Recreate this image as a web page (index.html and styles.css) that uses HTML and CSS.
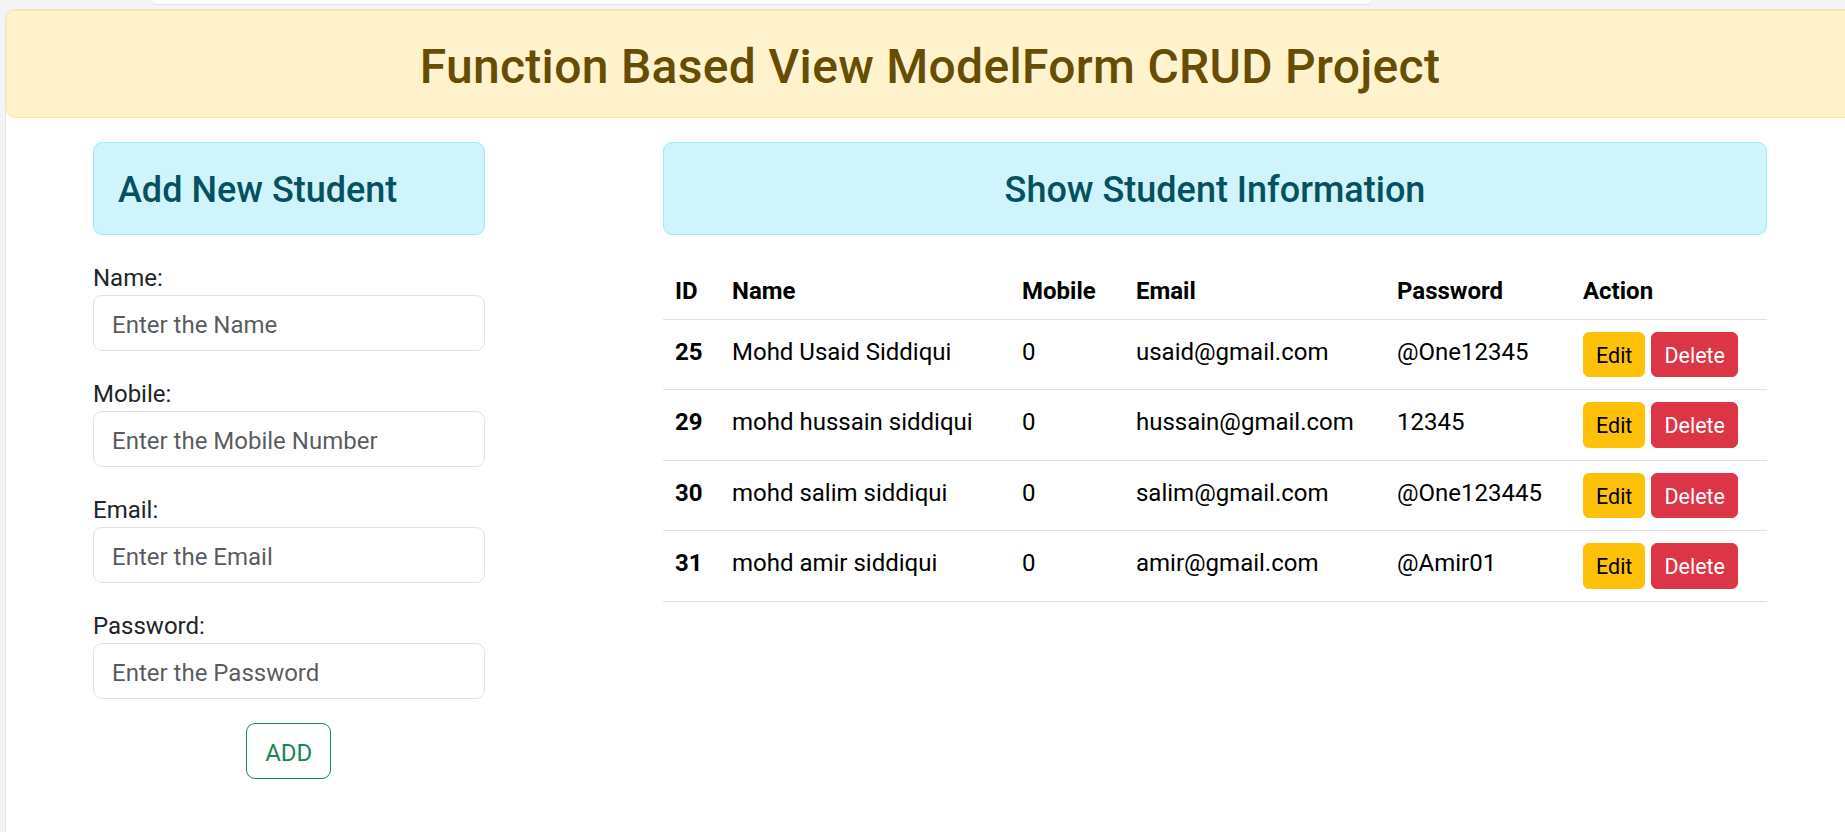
FILE: index.html
```html
<!DOCTYPE html>
<html lang="en">
<head>
<meta charset="utf-8">
<title>Function Based View ModelForm CRUD Project</title>
<link rel="stylesheet" href="styles.css">
</head>
<body>
<div class="topbar"><div class="topbar-tab"></div></div>
<div class="viewport">
  <div class="alert alert-warning banner">
    <h2 class="banner-title">Function Based View ModelForm CRUD Project</h2>
  </div>
  <div class="container">
    <div class="col-form">
      <div class="alert alert-info">
        <h4 class="box-title">Add New Student</h4>
      </div>
      <form class="student-form">
        <div class="field">
          <label class="field-label" for="name">Name:</label>
          <input class="form-input" id="name" type="text" placeholder="Enter the Name">
        </div>
        <div class="field">
          <label class="field-label" for="mobile">Mobile:</label>
          <input class="form-input" id="mobile" type="text" placeholder="Enter the Mobile Number">
        </div>
        <div class="field">
          <label class="field-label" for="email">Email:</label>
          <input class="form-input" id="email" type="text" placeholder="Enter the Email">
        </div>
        <div class="field">
          <label class="field-label" for="password">Password:</label>
          <input class="form-input" id="password" type="text" placeholder="Enter the Password">
        </div>
        <div class="form-actions">
          <button type="button" class="btn btn-outline-success">ADD</button>
        </div>
      </form>
    </div>
    <div class="col-table">
      <div class="alert alert-info centered">
        <h4 class="box-title">Show Student Information</h4>
      </div>
      <table class="table">
        <colgroup>
          <col class="c-id"><col class="c-name"><col class="c-mobile"><col class="c-email"><col class="c-pass"><col class="c-action">
        </colgroup>
        <thead>
          <tr><th>ID</th><th>Name</th><th>Mobile</th><th>Email</th><th>Password</th><th>Action</th></tr>
        </thead>
        <tbody>
          <tr>
            <th>25</th><td>Mohd Usaid Siddiqui</td><td>0</td><td>usaid@gmail.com</td><td>@One12345</td>
            <td class="action-cell"><div class="actions"><button type="button" class="btn btn-sm btn-warning">Edit</button><button type="button" class="btn btn-sm btn-danger">Delete</button></div></td>
          </tr>
          <tr>
            <th>29</th><td>mohd hussain siddiqui</td><td>0</td><td>hussain@gmail.com</td><td>12345</td>
            <td class="action-cell"><div class="actions"><button type="button" class="btn btn-sm btn-warning">Edit</button><button type="button" class="btn btn-sm btn-danger">Delete</button></div></td>
          </tr>
          <tr>
            <th>30</th><td>mohd salim siddiqui</td><td>0</td><td>salim@gmail.com</td><td>@One123445</td>
            <td class="action-cell"><div class="actions"><button type="button" class="btn btn-sm btn-warning">Edit</button><button type="button" class="btn btn-sm btn-danger">Delete</button></div></td>
          </tr>
          <tr>
            <th>31</th><td>mohd amir siddiqui</td><td>0</td><td>amir@gmail.com</td><td>@Amir01</td>
            <td class="action-cell"><div class="actions"><button type="button" class="btn btn-sm btn-warning">Edit</button><button type="button" class="btn btn-sm btn-danger">Delete</button></div></td>
          </tr>
        </tbody>
      </table>
    </div>
  </div>
</div>
</body>
</html>
```
FILE: styles.css
```css
* { box-sizing: border-box; }

html, body {
  margin: 0;
  height: 100%;
}

body {
  background: #f4f4f4;
  overflow: hidden;
  font-family: Roboto, "Noto Sans", "Liberation Sans", sans-serif;
  font-size: 24px;
  line-height: 1.5;
  color: #212529;
}

.topbar {
  height: 9px;
  padding-left: 152px;
}

.topbar-tab {
  width: 1218px;
  height: 4px;
  background: #ffffff;
  border-radius: 0 0 14px 14px;
  box-shadow: 0 1px 1px rgba(0, 0, 0, 0.07);
}

.viewport {
  margin-left: 5px;
  width: 1849px;
  height: 830px;
  background: #ffffff;
  border-left: 1px solid #e4e4e4;
  border-top: 1px solid #e4e4e4;
  border-top-left-radius: 9px;
}

.alert {
  border: 1px solid transparent;
  border-radius: 9px;
  padding: 26px 24px 22px;
  margin-bottom: 24px;
}

.alert-warning {
  background: #fff3cd;
  border-color: #ffe69c;
  color: #664d03;
}

.alert-info {
  background: #cff4fc;
  border-color: #9eeaf9;
  color: #055160;
}

.banner {
  text-align: center;
  padding: 27px 24px 21px;
}

.banner-title {
  margin: 0;
  font-size: 48px;
  font-weight: 500;
  line-height: 1.2;
  letter-spacing: 0.3px;
}

.box-title {
  margin: 0;
  font-size: 36px;
  font-weight: 500;
  line-height: 1.2;
}

.centered { text-align: center; }

.container {
  width: 1710px;
  margin: 0 auto;
  display: flex;
}

.col-form {
  flex: 0 0 25%;
  padding: 0 18px;
}

.col-table {
  flex: 0 0 66.6667%;
  margin-left: 8.3333%;
  padding: 0 18px;
}

.field {
  margin-bottom: 24px;
}

.field-label {
  display: block;
  padding-top: 2px;
  line-height: 34px;
  color: #212529;
}

.form-input {
  display: block;
  width: 100%;
  height: 56px;
  padding: 11px 18px 7px;
  font: inherit;
  line-height: 36px;
  color: #212529;
  background: #ffffff;
  border: 1px solid #dee2e6;
  border-radius: 9px;
  outline: none;
}

.form-input::placeholder {
  color: rgba(33, 37, 41, 0.75);
}

.form-actions {
  text-align: center;
}

.btn {
  display: inline-block;
  font: inherit;
  line-height: 36px;
  padding: 11px 18px 7px;
  border: 1px solid transparent;
  border-radius: 9px;
  background: transparent;
  cursor: pointer;
}

.btn-outline-success {
  color: #198754;
  border-color: #198754;
}

.btn-sm {
  font-size: 21.5px;
  line-height: 31.5px;
  padding: 7px 12px 5px;
  border-radius: 6px;
}

.btn-warning {
  background: #ffc107;
  border-color: #ffc107;
  color: #000000;
}

.btn-danger {
  background: #dc3545;
  border-color: #dc3545;
  color: #ffffff;
}

.table {
  width: 100%;
  border-collapse: collapse;
  table-layout: fixed;
  color: #000000;
}

.table th,
.table td {
  padding: 14px 12px 10px;
  text-align: left;
  vertical-align: top;
  border-bottom: 1px solid #dee2e6;
  line-height: 36px;
  white-space: nowrap;
}

.table .action-cell {
  padding: 12px;
}

.table th { font-weight: 700; }
.table td { font-weight: 400; }

.c-id { width: 57px; }
.c-name { width: 290px; }
.c-mobile { width: 114px; }
.c-email { width: 261px; }
.c-pass { width: 186px; }
.c-action { width: 196px; }

.actions {
  display: flex;
  gap: 6px;
}
```
